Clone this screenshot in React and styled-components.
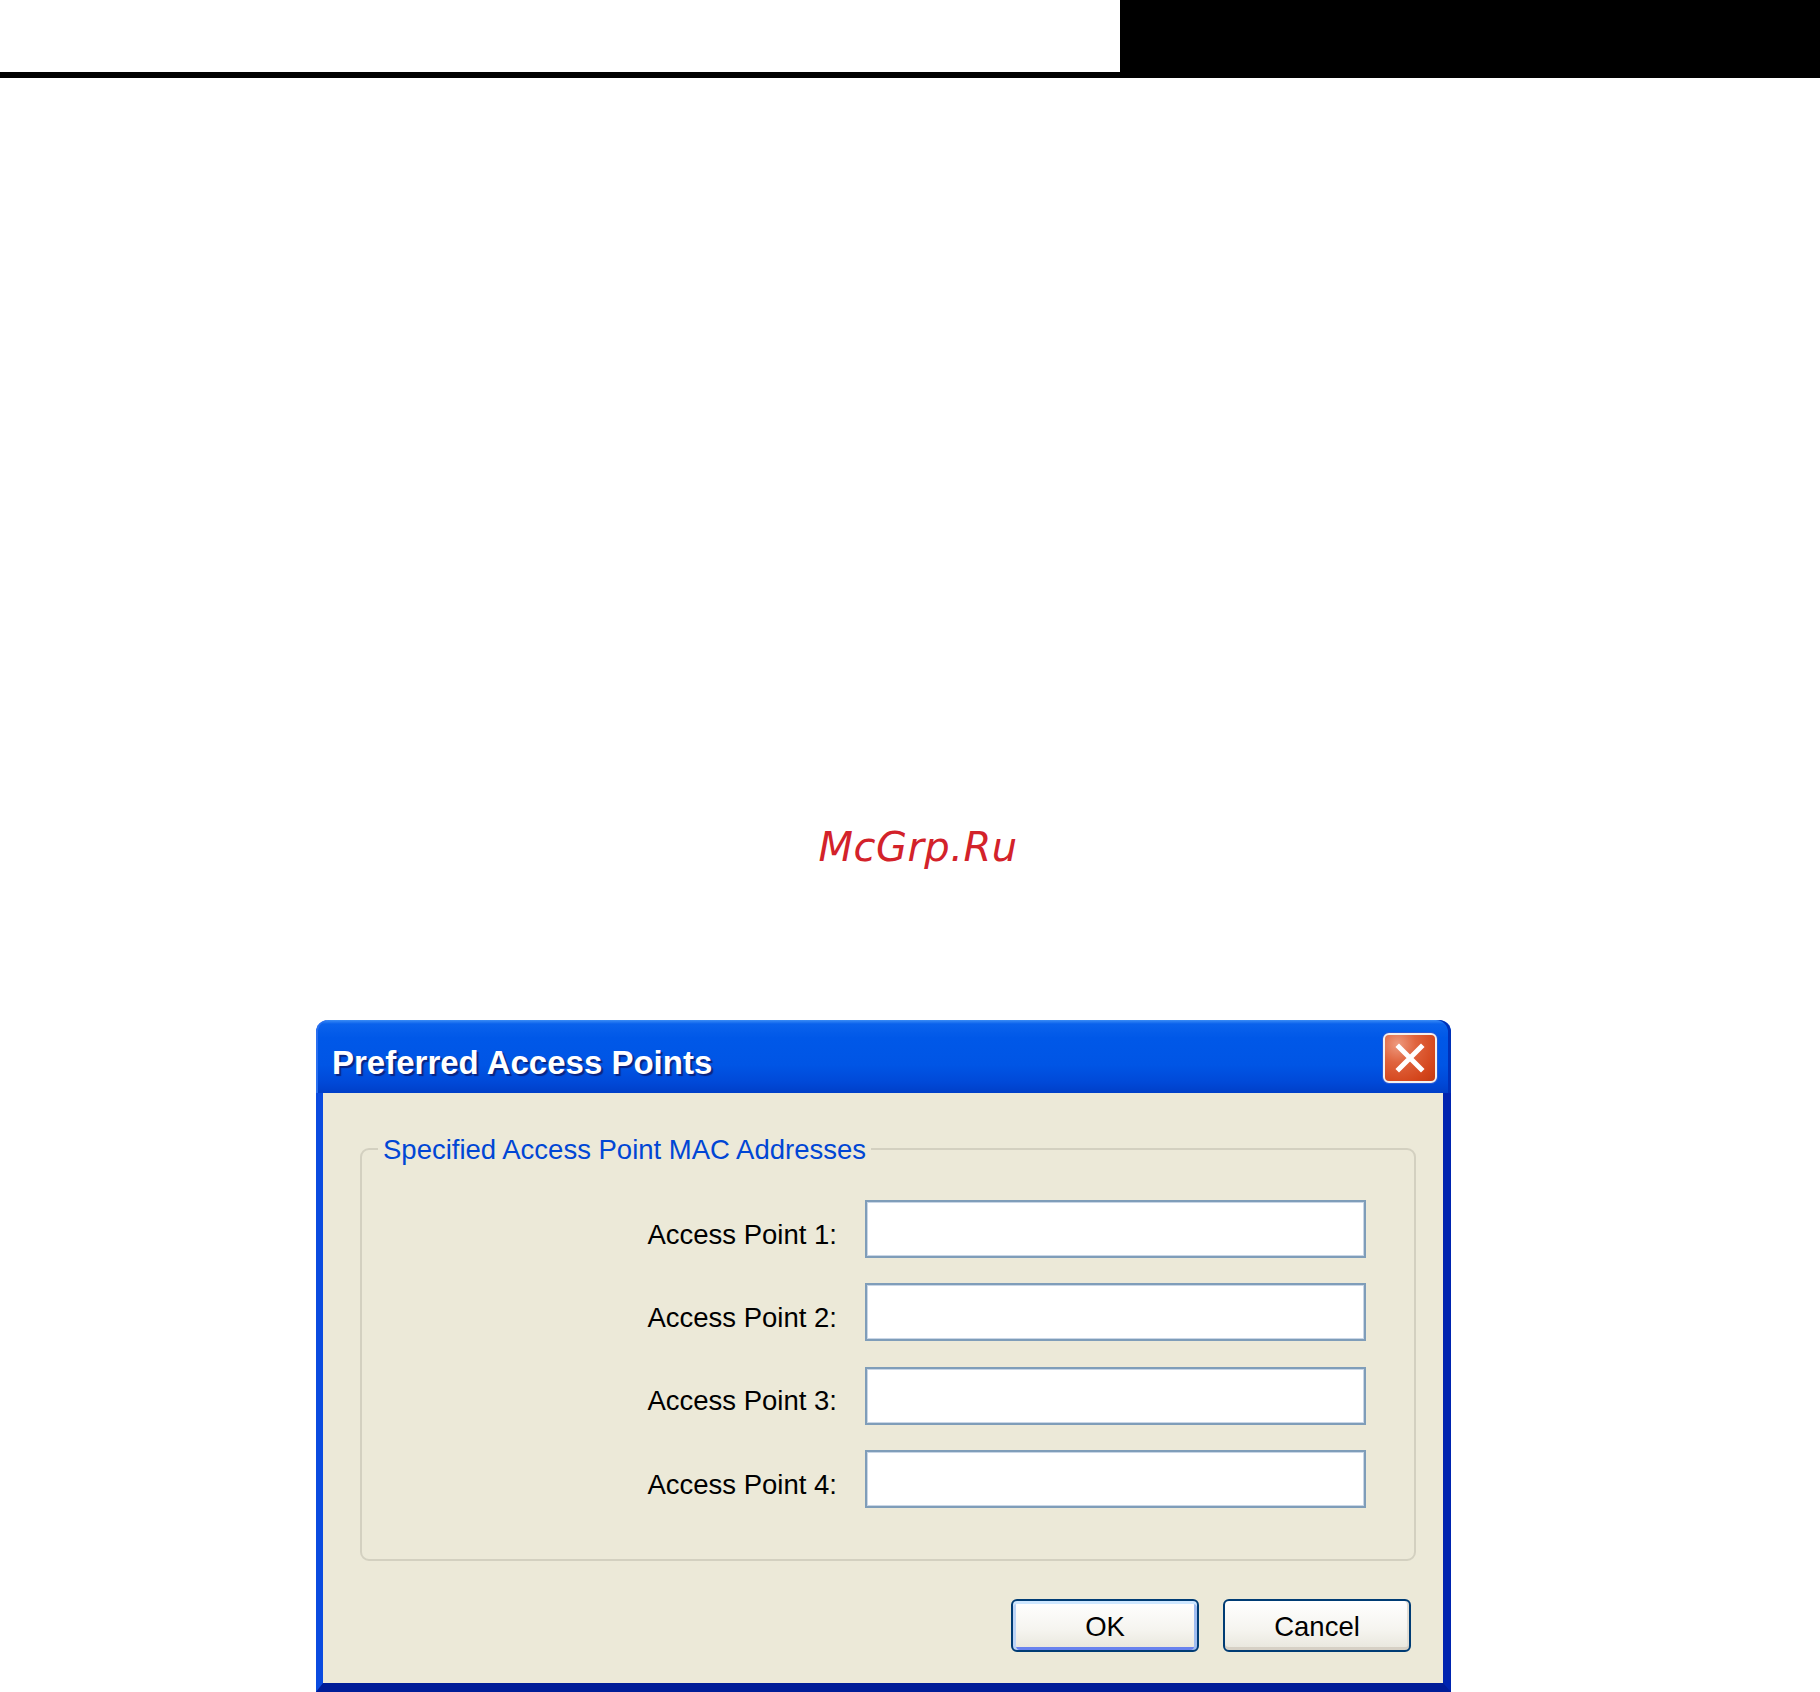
import React from "react";
import styled, { createGlobalStyle } from "styled-components";

const GlobalStyle = createGlobalStyle`
  html, body {
    margin: 0;
    padding: 0;
    background: #ffffff;
  }
  body {
    font-family: "Liberation Sans", Arial, sans-serif;
  }
`;

const Page = styled.div`
  width: 1820px;
  height: 1692px;
  display: flex;
  flex-direction: column;
  overflow: hidden;
`;

const Header = styled.div`
  display: flex;
  align-items: flex-start;
  height: 78px;
`;

const HeaderRule = styled.div`
  flex: 1;
  height: 72px;
  border-bottom: 6px solid #000;
`;

const HeaderBlock = styled.div`
  width: 700px;
  height: 78px;
  background: #000;
`;

const Watermark = styled.div`
  margin-top: 749px;
  padding-left: 16px;
  height: 40px;
  text-align: center;
  font-family: "DejaVu Sans", sans-serif;
  font-style: italic;
  font-size: 40px;
  line-height: 40px;
  color: #d3222a;
  letter-spacing: 0.5px;
`;

const Dialog = styled.div`
  margin-top: 153px;
  margin-left: 316px;
  width: 1135px;
  display: flex;
  flex-direction: column;
`;

const TitleBar = styled.div`
  height: 73px;
  box-sizing: border-box;
  display: flex;
  align-items: center;
  justify-content: space-between;
  padding: 4px 14px 0 16px;
  border-radius: 12px 12px 0 0;
  background: linear-gradient(
    to bottom,
    #3a8cf5 0px,
    #0a62ec 4px,
    #0058e8 18px,
    #0055e5 45px,
    #0049d8 62px,
    #003fc8 73px
  );
  box-shadow: inset 2px 0 0 #2a6ff0, inset -3px 0 0 #0030b8;
`;

const Title = styled.span`
  padding-top: 7px;
  font-family: "Liberation Sans", Arial, sans-serif;
  font-weight: bold;
  font-size: 33px;
  line-height: 33px;
  color: #ffffff;
  text-shadow: 2px 2px 1px #0a2480;
`;

const CloseButton = styled.button`
  width: 54px;
  height: 50px;
  padding: 0;
  margin-top: -1px;
  display: flex;
  align-items: center;
  justify-content: center;
  border: 2px solid #f4f1ee;
  border-radius: 6px;
  background: radial-gradient(
    circle at 25% 20%,
    #ee9a7e 0%,
    #e0643e 35%,
    #d4461c 75%,
    #c23a12 100%
  );
  box-shadow: 0 0 0 1px #2a5ad8;
  cursor: pointer;
`;

const Body = styled.div`
  background: #ece9d8;
  border-left: 7px solid #0a4be0;
  border-right: 8px solid #0024b0;
  border-bottom: 9px solid #001c98;
  padding: 55px 32px 31px 37px;
  display: flex;
  flex-direction: column;
`;

const GroupBox = styled.div`
  position: relative;
  width: 1056px;
  box-sizing: border-box;
  border: 2px solid #d3d0c0;
  border-radius: 9px;
  padding: 50px 48px 51px 0;
  display: flex;
  flex-direction: column;
  gap: 25.4px;
`;

const Legend = styled.span`
  position: absolute;
  top: -14px;
  left: 16px;
  padding: 0 5px;
  background: #ece9d8;
  font-size: 27.5px;
  line-height: 28px;
  color: #0046d5;
`;

const FieldRow = styled.div`
  display: flex;
  align-items: center;
  justify-content: flex-end;
  gap: 28px;
`;

const FieldLabel = styled.label`
  padding-top: 11px;
  font-size: 27.5px;
  line-height: 32px;
  color: #000;
`;

const TextInput = styled.input`
  width: 501px;
  height: 58px;
  box-sizing: border-box;
  border: 2px solid #7f9db9;
  box-shadow: inset 0 0 0 1px #c9d6e6;
  background: #fff;
  outline: none;
  font-size: 27px;
  padding: 0 8px;
`;

const ButtonRow = styled.div`
  margin-top: 38px;
  display: flex;
  justify-content: flex-end;
  gap: 24px;
`;

const Button = styled.button`
  width: 188px;
  height: 53px;
  box-sizing: border-box;
  border: 2px solid #003c74;
  border-radius: 6px;
  background: linear-gradient(to bottom, #ffffff 0%, #f5f4ef 60%, #e8e6dc 100%);
  box-shadow: ${(p) =>
    p.$primary
      ? "inset 0 3px 0 #cee7ff, inset 3px 0 0 #bcd4f6, inset -3px 0 0 #a0bdf0, inset 0 -3px 0 #6982ee"
      : "inset 0 -3px 0 #d6d0c5, inset -2px 0 0 #e2ded5"};
  font-family: "Liberation Sans", Arial, sans-serif;
  font-size: 27.5px;
  color: #000;
  padding: 2px 0 0;
  cursor: pointer;
`;

const fields = ["Access Point 1:", "Access Point 2:", "Access Point 3:", "Access Point 4:"];

export default function App() {
  return (
    <>
      <GlobalStyle />
      <Page>
        <Header>
          <HeaderRule />
          <HeaderBlock />
        </Header>
        <Watermark>McGrp.Ru</Watermark>
        <Dialog>
          <TitleBar>
            <Title>Preferred Access Points</Title>
            <CloseButton aria-label="Close">
              <svg width="30" height="30" viewBox="0 0 30 30">
                <path
                  d="M4 4 L26 26 M26 4 L4 26"
                  stroke="#ffffff"
                  strokeWidth="5"
                  strokeLinecap="square"
                />
              </svg>
            </CloseButton>
          </TitleBar>
          <Body>
            <GroupBox>
              <Legend>Specified Access Point MAC Addresses</Legend>
              {fields.map((f) => (
                <FieldRow key={f}>
                  <FieldLabel>{f}</FieldLabel>
                  <TextInput type="text" />
                </FieldRow>
              ))}
            </GroupBox>
            <ButtonRow>
              <Button $primary>OK</Button>
              <Button>Cancel</Button>
            </ButtonRow>
          </Body>
        </Dialog>
      </Page>
    </>
  );
}
